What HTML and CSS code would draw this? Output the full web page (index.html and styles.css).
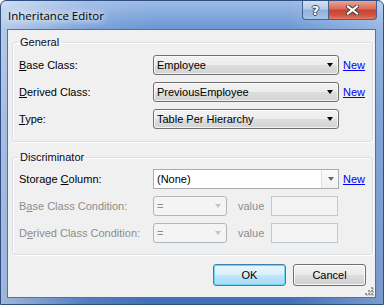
FILE: index.html
```html
<!DOCTYPE html>
<html>
<head>
    <title>Inheritance Editor</title>
    <link rel="stylesheet" href="styles.css">
</head>
<body>
    <div class="window">
        <div class="titlebar">
            <span class="title">Inheritance Editor</span>
            <div class="caption-buttons">
                <div class="cap help">?</div>
                <div class="cap close">
                    <svg width="13" height="10" viewBox="0 0 13 10">
                        <path d="M2 1.5 L11 8.5 M11 1.5 L2 8.5" stroke="#3b3b3b" stroke-width="4" stroke-linecap="square"/>
                        <path d="M2 1.5 L11 8.5 M11 1.5 L2 8.5" stroke="#ffffff" stroke-width="2.2" stroke-linecap="square"/>
                    </svg>
                </div>
            </div>
        </div>

        <div class="client">
            <fieldset class="group general">
                <legend>General</legend>
                <div class="row">
                    <label><u>B</u>ase Class:</label>
                    <div class="combo"><span>Employee</span><i class="arrow"></i></div>
                    <a class="link" href="#">New</a>
                </div>
                <div class="row">
                    <label><u>D</u>erived Class:</label>
                    <div class="combo"><span>PreviousEmployee</span><i class="arrow"></i></div>
                    <a class="link" href="#">New</a>
                </div>
                <div class="row">
                    <label><u>T</u>ype:</label>
                    <div class="combo"><span>Table Per Hierarchy</span><i class="arrow"></i></div>
                </div>
            </fieldset>

            <fieldset class="group discriminator">
                <legend>Discriminator</legend>
                <div class="row">
                    <label>Storage <u>C</u>olumn:</label>
                    <div class="combo edit"><span>(None)</span><div class="drop"><i class="arrow"></i></div></div>
                    <a class="link" href="#">New</a>
                </div>
                <div class="row">
                    <label class="disabled">B<u>a</u>se Class Condition:</label>
                    <div class="combo small off"><span>=</span><i class="arrow"></i></div>
                    <span class="value-label">value</span>
                    <div class="textbox off"></div>
                </div>
                <div class="row">
                    <label class="disabled">D<u>e</u>rived Class Condition:</label>
                    <div class="combo small off"><span>=</span><i class="arrow"></i></div>
                    <span class="value-label">value</span>
                    <div class="textbox off"></div>
                </div>
            </fieldset>

            <div class="buttons">
                <button class="btn default">OK</button>
                <button class="btn">Cancel</button>
            </div>

            <svg class="grip" width="9" height="9" viewBox="0 0 9 9">
                <rect x="7" y="1" width="2" height="2" fill="#c6c6c6"/>
                <rect x="4" y="4" width="2" height="2" fill="#c6c6c6"/>
                <rect x="7" y="4" width="2" height="2" fill="#c6c6c6"/>
                <rect x="1" y="7" width="2" height="2" fill="#c6c6c6"/>
                <rect x="4" y="7" width="2" height="2" fill="#c6c6c6"/>
                <rect x="7" y="7" width="2" height="2" fill="#c6c6c6"/>
                <rect x="6" y="0" width="2" height="2" fill="#9a9a9a"/>
                <rect x="3" y="3" width="2" height="2" fill="#9a9a9a"/>
                <rect x="6" y="3" width="2" height="2" fill="#9a9a9a"/>
                <rect x="0" y="6" width="2" height="2" fill="#9a9a9a"/>
                <rect x="3" y="6" width="2" height="2" fill="#9a9a9a"/>
                <rect x="6" y="6" width="2" height="2" fill="#9a9a9a"/>
            </svg>
        </div>
    </div>
</body>
</html>
```

FILE: styles.css
```css
body {
    margin: 0;
    font-family: "Liberation Sans", Arial, sans-serif;
    font-size: 11px;
    color: #000;
}
.window {
    width: 384px;
    height: 305px;
    box-sizing: border-box;
    border: 1px solid #2f4f82;
    border-radius: 6px 6px 0 0;
    padding: 0 7px 6px 6px;
    background:
        linear-gradient(to right, rgba(255,255,255,0.5), rgba(255,255,255,0.1) 22%, rgba(255,255,255,0) 40%, rgba(255,255,255,0) 75%, rgba(255,255,255,0.3)),
        linear-gradient(#9dbbe6, #6b97d4 28px, #4f7fc5 120px, #416fb8);
}
.titlebar {
    height: 28px;
    display: flex;
    justify-content: space-between;
    align-items: flex-start;
}
.title {
    font-family: "Open Sans", "Noto Sans", sans-serif;
    font-size: 11.5px;
    line-height: 29px;
    padding-left: 1px;
    color: #000;
    text-shadow: 0 0 6px #fff, 0 0 10px #fff, 0 0 14px rgba(255,255,255,0.9);
}
.caption-buttons {
    display: flex;
    margin-right: -1px;
}
.cap {
    height: 19px;
    box-sizing: border-box;
    border: 1px solid #45608c;
    border-top: none;
    display: flex;
    align-items: center;
    justify-content: center;
}
.help {
    width: 27px;
    border-radius: 0 0 0 4px;
    background: linear-gradient(#d3e1f3, #b4cbea 45%, #91b1dc 50%, #a9c3e7);
    color: #fff;
    font-family: "DejaVu Sans", sans-serif;
    font-weight: bold;
    font-size: 13px;
    text-shadow: 1px 0 #3d4a5e, -1px 0 #3d4a5e, 0 1px #3d4a5e, 0 -1px #3d4a5e;
}
.close {
    width: 48px;
    border-left: none;
    border-radius: 0 0 4px 0;
    background: linear-gradient(#e9a597, #d96a57 45%, #c6412e 50%, #d0553f 80%, #e07c62);
}
.client {
    position: relative;
    height: 269px;
    box-sizing: border-box;
    border: 1px solid #5d6f8c;
    background: #f0f0f0;
    padding: 5px 2px 0 4px;
}
.group {
    margin: 0;
    padding: 6px 6px 12px 6px;
    border: 1px solid #d5dfe5;
    border-radius: 3px;
    box-shadow: inset 1px 1px 0 #fff, 1px 1px 0 #fff;
}
.group legend {
    margin-left: -1px;
    padding: 0 2px;
    line-height: 14px;
    color: #0a0a20;
}
.discriminator {
    margin-top: 8px;
    padding-top: 5px;
    padding-bottom: 11px;
}
.row {
    display: flex;
    align-items: center;
    height: 20px;
    margin-bottom: 7px;
}
.row:last-child {
    margin-bottom: 0;
}
.row label {
    width: 134px;
    flex: none;
}
.row label.disabled {
    color: #8d8d8d;
}
.combo {
    position: relative;
    width: 186px;
    height: 20px;
    box-sizing: border-box;
    border: 1px solid #707070;
    border-radius: 3px;
    background: linear-gradient(#f3f3f3, #ececec 48%, #dedede 52%, #d2d2d2);
    box-shadow: inset 0 0 0 1px rgba(255,255,255,0.7);
    display: flex;
    align-items: center;
    padding-left: 3px;
}
.arrow {
    position: absolute;
    right: 5px;
    top: 7px;
    width: 0;
    height: 0;
    border-left: 3.5px solid transparent;
    border-right: 3.5px solid transparent;
    border-top: 4px solid #000;
}
.combo.edit {
    border: 1px solid #abadb3;
    border-radius: 0;
    background: #fff;
    box-shadow: none;
}
.drop {
    position: absolute;
    right: 0;
    top: 0;
    bottom: 0;
    width: 16px;
    border-left: 1px solid #dde1e6;
    background: linear-gradient(#fbfbfb, #f1f1f1);
}
.drop .arrow {
    right: 4px;
    top: 7px;
    border-top-color: #6a6a6a;
}
.combo.small {
    width: 74px;
}
.combo.off {
    border-color: #b3b6b9;
    background: #f4f4f4;
    box-shadow: none;
    color: #8d8d8d;
}
.combo.off .arrow {
    border-top-color: #c4c4c4;
}
.link {
    margin-left: 4px;
    color: #0000ff;
    text-decoration: underline;
}
.value-label {
    margin-left: 11px;
    color: #8d8d8d;
}
.textbox {
    margin-left: 7px;
    width: 67px;
    height: 20px;
    box-sizing: border-box;
    border: 1px solid #c3c6ca;
    background: #f4f4f4;
}
.buttons {
    display: flex;
    justify-content: flex-end;
    gap: 7px;
    margin-top: 9px;
    padding-right: 7px;
}
.btn {
    width: 73px;
    height: 22px;
    font-family: "Liberation Sans", Arial, sans-serif;
    font-size: 11px;
    color: #000;
    border: 1px solid #707070;
    border-radius: 3px;
    background: linear-gradient(#f2f2f2, #ebebeb 48%, #dddddd 52%, #cfcfcf);
    box-shadow: inset 0 0 0 1px rgba(255,255,255,0.8);
    padding: 0;
}
.btn.default {
    border-color: #3c7fb1;
    background: linear-gradient(#eaf6fd, #d9f0fc 48%, #bee6fd 52%, #a7d9f5);
    box-shadow: inset 0 0 0 1px #72d4f5;
}
.grip {
    position: absolute;
    right: 1px;
    bottom: 1px;
}
```
